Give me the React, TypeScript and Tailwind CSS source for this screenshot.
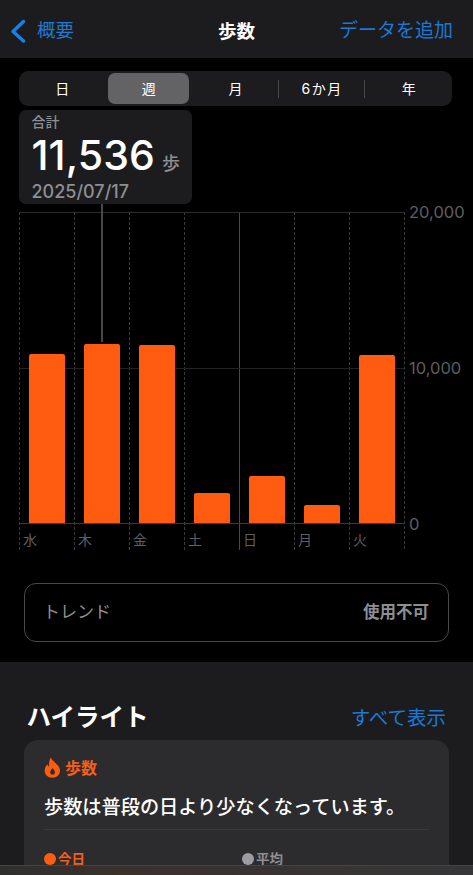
const FONT = "[font-family:Inter,'Noto_Sans_CJK_JP',sans-serif]";

const days = [
  { label: "水", top: 142, solid: false },
  { label: "木", top: 132, solid: false },
  { label: "金", top: 133, solid: false },
  { label: "土", top: 281, solid: false },
  { label: "日", top: 264, solid: true },
  { label: "月", top: 293, solid: false },
  { label: "火", top: 143, solid: false },
];

const tabs = ["日", "週", "月", "6か月", "年"];

function Header() {
  return (
    <header className="h-[58px] shrink-0 bg-[#1c1c1e] relative flex items-center justify-between pl-[10px] pr-[20px] pt-[4px]">
      <div className="flex items-center gap-[11px] text-[#1d78d6] text-[18.5px]">
        <svg width="16" height="24" viewBox="0 0 16 24" fill="none" stroke="#1a7fe0" strokeWidth="3.4" strokeLinecap="round" strokeLinejoin="round">
          <path d="M13.500 2.500 3 12.500l10.500 9.500" />
        </svg>
        <span>概要</span>
      </div>
      <span className="absolute left-[218px] top-[18px] text-white text-[18.5px] leading-[26px] font-bold">歩数</span>
      <span className="text-[#1d78d6] text-[19px]">データを追加</span>
    </header>
  );
}

function Segments() {
  return (
    <div className="h-[35px] w-[433px] rounded-[9px] bg-[#1c1c1e] flex items-center">
      {tabs.map((t, i) => (
        <div key={t} className="flex items-center flex-1 h-full relative">
          <div
            className={
              i === 1
                ? "flex-1 h-[31px] rounded-[7px] bg-[#636366] flex items-center justify-center text-white text-[14px] ml-[2.5px] mr-[3px]"
                : i === 3
                  ? "flex-1 h-[31px] flex items-center justify-center text-white text-[14px] tracking-[1.5px]"
                  : "flex-1 h-[31px] flex items-center justify-center text-white text-[14px]"
            }
          >
            {t}
          </div>
          {(i === 2 || i === 3) && <div className="absolute right-0 top-[9px] h-[18px] w-px bg-[#48484a]" />}
        </div>
      ))}
    </div>
  );
}

function Tooltip() {
  return (
    <div className="w-[173px] h-[94px] rounded-[7px] bg-[#1c1c1e] pl-[12.5px] pt-[3px] mt-[4px] relative z-10">
      <div className="text-[#8e8e93] text-[14px] leading-[18px] font-medium">合計</div>
      <div className="flex items-baseline text-white leading-[49px] h-[45px]">
        <span className="text-[41px] font-medium tracking-[0.1px]">11,536</span>
        <span className="text-[#8e8e93] text-[18px] ml-[7px] font-medium">歩</span>
      </div>
      <div className="text-[#8e8e93] text-[18px] leading-[24px] mt-[4px] font-medium">2025/07/17</div>
    </div>
  );
}

function Chart() {
  return (
    <div className="relative mt-[8px] w-[433px] h-[337px]">
      <div className="w-[386px] h-[337px] grid grid-cols-7 border-r border-dashed border-[#3a3a3c] relative">
        {days.map((d) => (
          <div
            key={d.label}
            className={
              d.solid
                ? "relative border-l border-solid border-[#48484a] h-full"
                : "relative border-l border-dashed border-[#3a3a3c] h-full"
            }
          >
            <div className="h-[311px] flex flex-col justify-end items-center">
              <div className="w-[36px] bg-[#ff5c11] rounded-t-[2px] relative z-10" style={{ height: 311 - d.top }} />
            </div>
            <div className="text-[#5e5e62] text-[14px] leading-[20px] pl-[3px] pt-[7px]">{d.label}</div>
          </div>
        ))}
        <div className="absolute left-0 right-0 top-0 h-px bg-[#2c2c2e]" />
        <div className="absolute left-0 right-0 top-[156px] h-px bg-[#232325]" />
        <div className="absolute left-0 right-0 top-[311px] h-px bg-[#3a3a3c]" />
        <div className="absolute left-[82px] top-[-8px] h-[138px] w-[2px] bg-[#48484a]" />
      </div>
      <span className="absolute left-[390px] top-[-11px] text-[#5e5e62] text-[16.5px] leading-[22px]">20,000</span>
      <span className="absolute left-[390px] top-[145px] text-[#5e5e62] text-[16.5px] leading-[22px]">10,000</span>
      <span className="absolute left-[390px] top-[301px] text-[#5e5e62] text-[16.5px] leading-[22px]">0</span>
    </div>
  );
}

function Trend() {
  return (
    <div className="mt-[34px] ml-[5px] w-[425px] h-[59px] rounded-[12px] border-[1.5px] border-[#48484a] flex items-center justify-between pl-[18px] pr-[19px]">
      <span className="text-[#8e8e93] text-[17px]">トレンド</span>
      <span className="text-[#8e8e93] text-[16.5px] font-bold">使用不可</span>
    </div>
  );
}

function Highlights() {
  return (
    <section className="flex-1 min-h-0 overflow-hidden bg-[#1c1c1e] px-[24px] pt-[37px]">
      <div className="flex items-center justify-between pl-[2.5px] h-[36px]">
        <h2 className="text-white text-[24.5px] font-bold leading-[36px]">ハイライト</h2>
        <span className="text-[#1d78d6] text-[19.5px] pr-[3px] pt-[3px]">すべて表示</span>
      </div>
      <div className="mt-[5px] w-[425px] h-[200px] rounded-t-[14px] bg-[#2c2c2e] px-[20px] pt-[14px]">
        <div className="flex items-center gap-[4px] text-[#f0611d] text-[16px] font-bold leading-[28px] h-[28px]">
          <svg width="17" height="21" viewBox="0 0 17 21" fill="#ff5c11" className="-mt-[2px]">
            <path fillRule="evenodd" d="M6.500.5c1.500 2.500 3.400 4 5.500 6 2.400 2.200 4 4.400 4 7.200 0 4-3.300 7-7.700 7C4 20.700.700 17.800.700 13.800c0-2.500 1-4.600 2.700-6.300.3 1 .8 1.700 1.700 2.100C4.800 6.500 5.200 3.400 6.500.5Zm2 10.500c-.5 1.500-2.300 2.300-2.300 4.300 0 1.400 1 2.400 2.300 2.400s2.400-1 2.400-2.400c0-1.900-1.600-2.800-2.400-4.300Z" />
          </svg>
          <span>歩数</span>
        </div>
        <div className="text-white text-[19.200px] font-medium leading-[30px] mt-[10px] whitespace-nowrap">歩数は普段の日より少なくなっています。</div>
        <div className="h-px bg-[#3a3a3c] mt-[7px]" />
        <div className="flex mt-[19px] text-[13.500px] font-bold leading-[20px]">
          <div className="w-[198px] flex items-center gap-[2px] text-[#f0611d]">
            <span className="w-[12px] h-[12px] rounded-full bg-[#ff5c11]" />
            <span>今日</span>
          </div>
          <div className="flex items-center gap-[2px] text-[#8e8e93]">
            <span className="w-[12px] h-[12px] rounded-full bg-[#9c9ca3]" />
            <span>平均</span>
          </div>
        </div>
      </div>
    </section>
  );
}

export default function App() {
  return (
    <div className={`${FONT} w-[473px] h-[875px] overflow-hidden bg-black flex flex-col`}>
      <Header />
      <main className="h-[604px] shrink-0 bg-black px-[19px] pt-[13px]">
        <Segments />
        <Tooltip />
        <Chart />
        <Trend />
      </main>
      <Highlights />
      <div className="h-[10px] shrink-0 bg-linear-to-r from-[#2f2f2f] via-[#3a312c] via-25% to-[#363638] border-t border-[#444446]" />
    </div>
  );
}
